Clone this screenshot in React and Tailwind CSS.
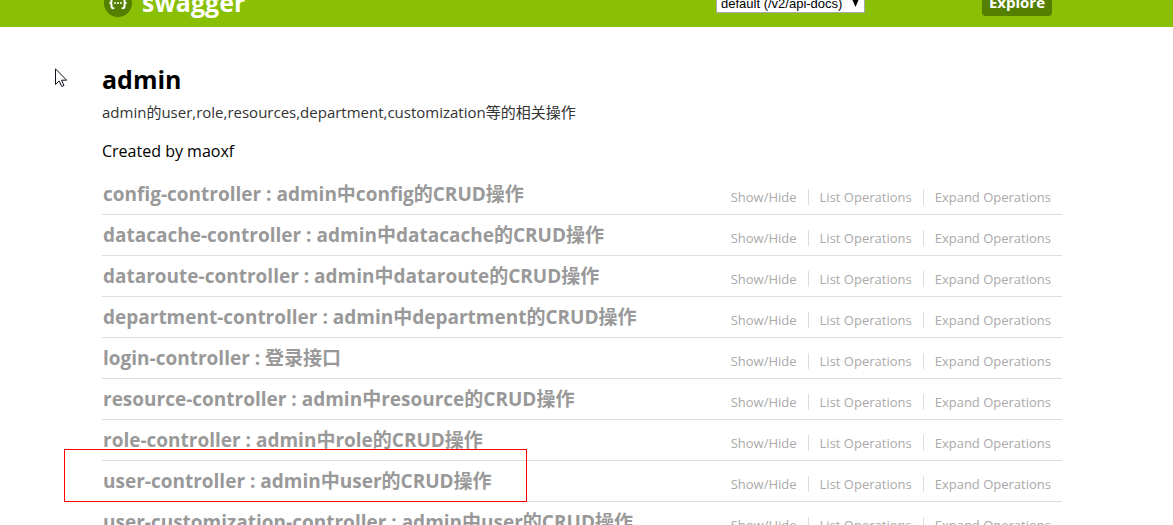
const controllers = [
  { name: 'config-controller', description: 'admin中config的CRUD操作' },
  { name: 'datacache-controller', description: 'admin中datacache的CRUD操作' },
  { name: 'dataroute-controller', description: 'admin中dataroute的CRUD操作' },
  { name: 'department-controller', description: 'admin中department的CRUD操作' },
  { name: 'login-controller', description: '登录接口' },
  { name: 'resource-controller', description: 'admin中resource的CRUD操作' },
  { name: 'role-controller', description: 'admin中role的CRUD操作' },
  { name: 'user-controller', description: 'admin中user的CRUD操作', marked: true },
  { name: 'user-customization-controller', description: 'admin中user的CRUD操作' },
];

const operations = ['Show/Hide', 'List Operations', 'Expand Operations'];

function Logo() {
  return (
    <a href="#top" className="flex items-end gap-[10px] pl-[2px] text-white">
      <svg className="mb-[10px] size-7 shrink-0" viewBox="0 0 28 28" aria-hidden="true">
        <circle cx="14" cy="14" r="14" fill="#547f00" />
        <g fill="none" stroke="#fff" strokeWidth="2" strokeLinecap="round" strokeLinejoin="round">
          <path d="M9.500 9c-1.500 0-2 .7-2 2v1.500c0 1.100-.4 1.600-1.300 1.600.9 0 1.300.5 1.300 1.600v1.500c0 1.300.5 2 2 2" />
          <path d="M18.500 9c1.500 0 2 .7 2 2v1.500c0 1.100.4 1.600 1.300 1.600-.9 0-1.300.5-1.300 1.600v1.500c0 1.300-.5 2-2 2" />
        </g>
        <g fill="#fff">
          <circle cx="11" cy="14" r="1" />
          <circle cx="14" cy="14" r="1" />
          <circle cx="17" cy="14" r="1" />
        </g>
      </svg>
      <span className="mb-[9px] text-[25px] leading-8 font-bold">swagger</span>
    </a>
  );
}

function Header() {
  return (
    <header className="h-[27px] overflow-hidden bg-[#89bf04] pr-[9px]">
      <div className="mx-auto flex h-full max-w-[960px] items-end">
        <Logo />
        <form className="ml-auto flex items-end pr-[10px]">
          <div className="relative mr-[117px] mb-[14px]">
            <select
              aria-label="API definition"
              className="block h-[20px] w-[149px] appearance-none border border-[#a9a9a9] bg-white pt-[2px] pl-1 font-['Liberation_Sans',sans-serif] text-[13px] leading-4 text-black"
            >
              <option>default (/v2/api-docs)</option>
            </select>
            <svg className="pointer-events-none absolute right-[6px] bottom-[6px] h-[8px] w-[7px]" viewBox="0 0 7 8" aria-hidden="true">
              <path d="M0 0h7L3.500 8z" fill="#000" />
            </svg>
          </div>
          <button
            type="button"
            className="mb-[11px] h-[27px] w-[70px] rounded bg-[#547f00] text-[15px] leading-[27px] font-bold text-white"
          >
            Explore
          </button>
        </form>
      </div>
    </header>
  );
}

function ControllerRow({ name, description, marked }) {
  return (
    <li className="relative flex h-[41px] items-center justify-between border-b border-[#ddd] pr-[11px] pl-px">
      <h2 className="text-[19px] leading-9 font-bold whitespace-nowrap text-[#999]">
        <a href={`#${name}`}>{name}</a> : {description}
      </h2>
      <ul className="mt-[6px] flex divide-x divide-[#ddd] text-[13px] leading-4 whitespace-nowrap text-[#aaa]">
        {operations.map((label) => (
          <li key={label} className="px-[11px] last:pr-0">
            <a href={`#${name}`}>{label}</a>
          </li>
        ))}
      </ul>
      {marked && (
        <div className="pointer-events-none absolute -top-[12px] -left-[38px] h-[53px] w-[463px] border border-[#f00]" />
      )}
    </li>
  );
}

export default function App() {
  return (
    <div
      id="top"
      className="relative h-screen overflow-hidden bg-white font-['Open_Sans','Noto_Sans_CJK_SC',sans-serif]"
    >
      <Header />
      <main className="pr-[9px]">
        <div className="mx-auto max-w-[960px] pt-[34px]">
          <h1 className="text-[25px] leading-9 font-bold text-black">admin</h1>
          <p className="mt-[3px] text-[15px] leading-6 text-[#333]">
            admin的user,role,resources,department,customization等的相关操作
          </p>
          <p className="mt-[15px] text-[16px] leading-6 text-black">Created by maoxf</p>
          <ul className="mt-[11px]">
            {controllers.map((controller) => (
              <ControllerRow key={controller.name} {...controller} />
            ))}
          </ul>
        </div>
      </main>
      <svg className="pointer-events-none absolute top-[68px] left-[55px] h-[20px] w-[13px]" viewBox="0 0 13 20" aria-hidden="true">
        <path d="M.5.8v15.700l3.700-3.500 2.600 5.500 2.200-1-2.500-5.300h5.100z" fill="#fff" stroke="#112" strokeWidth="1" />
      </svg>
    </div>
  );
}
